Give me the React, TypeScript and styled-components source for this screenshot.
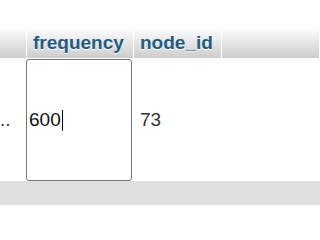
import React from 'react'
import styled, { createGlobalStyle } from 'styled-components'

const font = '"Liberation Sans", Arial, sans-serif'

const Global = createGlobalStyle`
  html, body { margin: 0; padding: 0; background: #fff; }
  body { font-family: ${font}; overflow: hidden; }
`

const Page = styled.div`
  width: 100%;
  min-width: 224px;
  height: 205px;
  display: flex;
  flex-direction: column;
  overflow: hidden;
`

const Spacer = styled.div`
  height: 27px;
  flex: none;
`

const HeadRow = styled.div`
  height: 31px;
  flex: none;
  display: flex;
  background: linear-gradient(#ffffff, #cccccc);
`

const HeadCell = styled.div<{ w?: number }>`
  width: ${p => (p.w ? `${p.w}px` : 'auto')};
  flex: ${p => (p.w ? 'none' : '1')};
  box-sizing: border-box;
  border-right: 1px solid #ffffff;
  padding-left: 6px;
  display: flex;
  align-items: center;
  font-weight: bold;
  font-size: 19px;
  color: #235a81;
  text-shadow: 0 1px 0 #fff;
  white-space: nowrap;
  overflow: hidden;
`

const DataRow = styled.div`
  height: 123px;
  flex: none;
  display: flex;
  align-items: center;
  background: #fff;
`

const DataCell = styled.div<{ w: number }>`
  width: ${p => p.w}px;
  flex: none;
  box-sizing: border-box;
  padding-left: 6px;
  font-size: 19px;
  color: #333;
  white-space: nowrap;
  overflow: hidden;
`

const Clipped = styled(DataCell)`
  text-align: right;
  padding-right: 16px;
  padding-left: 0;
`

const EditBox = styled.div`
  width: 106px;
  height: 122px;
  margin: 1px 2px 0 0;
  flex: none;
  box-sizing: border-box;
  border: 1px solid #767676;
  border-radius: 3px;
  padding: 0 2px;
  display: flex;
  align-items: center;
  font-size: 19px;
  color: #111;
  cursor: text;
`

const Caret = styled.span`
  display: inline-block;
  width: 1px;
  height: 21px;
  margin-left: 1px;
  background: #000;
`

const Footer = styled.div`
  flex: 1;
  background: #dfdfdf;
`

export default function App() {
  return (
    <Page>
      <Global />
      <Spacer />
      <HeadRow>
        <HeadCell w={27} />
        <HeadCell w={107}>frequency</HeadCell>
        <HeadCell w={88}>node_id</HeadCell>
        <HeadCell />
      </HeadRow>
      <DataRow>
        <Clipped w={26}>..</Clipped>
        <EditBox>
          600
          <Caret />
        </EditBox>
        <DataCell w={90}>73</DataCell>
      </DataRow>
      <Footer />
    </Page>
  )
}
